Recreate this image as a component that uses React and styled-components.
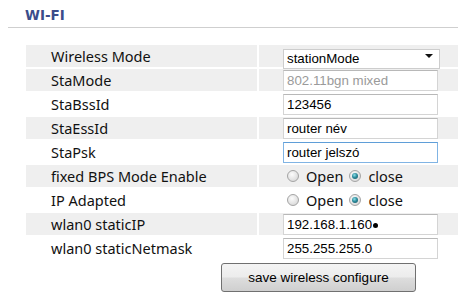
import React from 'react';
import styled, { createGlobalStyle } from 'styled-components';

const GlobalStyle = createGlobalStyle`
  html, body {
    margin: 0;
    padding: 0;
    background: #fff;
  }
  body {
    width: 461px;
    height: 300px;
    overflow: hidden;
    font-family: 'Noto Sans', 'Open Sans', sans-serif;
  }
`;

const Page = styled.div`
  padding: 0 3px 0 0;
`;

const Header = styled.div`
  margin-left: 8px;
  height: 28px;
  border-bottom: 1px solid #cfcfcf;
  box-sizing: border-box;
`;

const Title = styled.h3`
  margin: 0;
  padding: 7px 0 0 17px;
  font-family: 'DejaVu Sans', Verdana, sans-serif;
  font-size: 13.5px;
  font-weight: bold;
  color: #3b4d8a;
  line-height: 16px;
`;

const Table = styled.div`
  margin: 17px 0 0 26px;
  display: flex;
  flex-direction: column;
  gap: 2px;
`;

const Row = styled.div`
  display: grid;
  grid-template-columns: 231px 1fr;
  column-gap: 2px;
  height: 22px;
`;

const Cell = styled.div`
  display: flex;
  align-items: center;
  background: ${(p) => (p.$shade ? '#efefef' : '#fff')};
`;

const Label = styled(Cell)`
  padding-left: 25px;
  font-size: 14.5px;
  color: #111;
  white-space: nowrap;
`;

const Value = styled(Cell)`
  padding-left: 24px;
`;

const TextInput = styled.input`
  box-sizing: border-box;
  width: 155px;
  height: 21px;
  padding: 0 3px;
  border: 1px solid ${(p) => (p.$focus ? '#80b4e4' : '#d4d4d4')};
  border-top-color: ${(p) => (p.$focus ? '#5f9ed8' : '#b8b8b8')};
  background: #fff;
  font-family: 'Liberation Sans', Arial, sans-serif;
  font-size: 13.3px;
  color: #000;
  outline: none;

  &:disabled {
    color: #9a9a9a;
    background: #fff;
  }
`;

const SelectBox = styled.div`
  position: relative;
  width: 157px;
  height: 20px;
`;

const Select = styled.select`
  appearance: none;
  box-sizing: border-box;
  width: 100%;
  height: 100%;
  padding: 0 18px 0 3px;
  border: 1px solid #cdcdcd;
  background: #fff;
  font-family: 'Liberation Sans', Arial, sans-serif;
  font-size: 13.3px;
  color: #000;
  outline: none;
`;

const Caret = styled.span`
  position: absolute;
  right: 7px;
  top: 8px;
  width: 0;
  height: 0;
  border-left: 4px solid transparent;
  border-right: 4px solid transparent;
  border-top: 4px solid #111;
  pointer-events: none;
`;

const RadioGroup = styled.div`
  display: flex;
  align-items: center;
  margin-left: 4px;
  font-size: 14.5px;
  color: #111;
`;

const RadioLabel = styled.label`
  display: flex;
  align-items: center;
  margin-right: 6px;
`;

const Radio = styled.input`
  appearance: none;
  margin: 0 7px 0 0;
  width: 12px;
  height: 12px;
  border-radius: 50%;
  border: 1px solid #a4a4a4;
  background: radial-gradient(circle at 40% 35%, #fcfcfc 0%, #e2e2e2 60%, #cfcfcf 100%);
  position: relative;

  &:checked::after {
    content: '';
    position: absolute;
    left: 2px;
    top: 2px;
    width: 6px;
    height: 6px;
    border-radius: 50%;
    background: radial-gradient(circle at 40% 35%, #8fe0ea 0%, #2d8c9c 45%, #14505e 100%);
  }
`;

const Cursor = styled.span`
  display: inline-block;
  width: 5px;
  height: 5px;
  border-radius: 50%;
  background: #000;
  margin: 3px 0 0 1px;
`;

const FakeInput = styled.div`
  box-sizing: border-box;
  width: 155px;
  height: 21px;
  padding: 0 3px;
  display: flex;
  align-items: center;
  border: 1px solid #d4d4d4;
  border-top-color: #b8b8b8;
  background: #fff;
  font-family: 'Liberation Sans', Arial, sans-serif;
  font-size: 13.3px;
  color: #000;
`;

const ButtonRow = styled.div`
  margin: 4px 0 0 221px;
`;

const Button = styled.button`
  width: 195px;
  height: 29px;
  border: 1px solid #707070;
  border-radius: 3px;
  background: linear-gradient(#f4f4f4 0%, #ececec 48%, #dddddd 52%, #cfcfcf 100%);
  font-family: 'Liberation Sans', Arial, sans-serif;
  font-size: 13.5px;
  color: #000;
  padding: 0;
`;

const rows = [
  { label: 'Wireless Mode', kind: 'select', value: 'stationMode', shade: true },
  { label: 'StaMode', kind: 'disabled', value: '802.11bgn mixed', shade: true },
  { label: 'StaBssId', kind: 'text', value: '123456' },
  { label: 'StaEssId', kind: 'text', value: 'router név', shade: true },
  { label: 'StaPsk', kind: 'focus', value: 'router jelszó' },
  { label: 'fixed BPS Mode Enable', kind: 'radio', name: 'bps', shade: true },
  { label: 'IP Adapted', kind: 'radio', name: 'ipadapt' },
  { label: 'wlan0 staticIP', kind: 'ip', value: '192.168.1.160', shade: true },
  { label: 'wlan0 staticNetmask', kind: 'text', value: '255.255.255.0' },
];

const Field = ({ row }) => {
  switch (row.kind) {
    case 'select':
      return (
        <SelectBox>
          <Select defaultValue={row.value}>
            <option value="stationMode">stationMode</option>
            <option value="apMode">apMode</option>
          </Select>
          <Caret />
        </SelectBox>
      );
    case 'disabled':
      return <TextInput disabled defaultValue={row.value} />;
    case 'focus':
      return <TextInput $focus defaultValue={row.value} />;
    case 'radio':
      return (
        <RadioGroup>
          <RadioLabel>
            <Radio type="radio" name={row.name} />
            Open
          </RadioLabel>
          <RadioLabel>
            <Radio type="radio" name={row.name} defaultChecked />
            close
          </RadioLabel>
        </RadioGroup>
      );
    case 'ip':
      return (
        <FakeInput>
          {row.value}
          <Cursor />
        </FakeInput>
      );
    default:
      return <TextInput defaultValue={row.value} />;
  }
};

export default function App() {
  return (
    <Page>
      <GlobalStyle />
      <Header>
        <Title>WI-FI</Title>
      </Header>
      <Table>
        {rows.map((row) => (
          <Row key={row.label}>
            <Label $shade={row.shade}>{row.label}</Label>
            <Value $shade={row.shade}>
              <Field row={row} />
            </Value>
          </Row>
        ))}
      </Table>
      <ButtonRow>
        <Button>save wireless configure</Button>
      </ButtonRow>
    </Page>
  );
}
